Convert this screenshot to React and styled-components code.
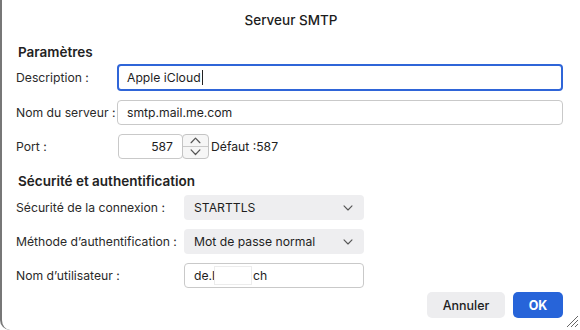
import React from 'react'
import styled, { createGlobalStyle } from 'styled-components'

const Global = createGlobalStyle`
  html, body { margin: 0; padding: 0; background: #fff; }
  body { font-family: "Inter", "Liberation Sans", sans-serif; color: #222; }
`

const Window = styled.div`
  position: relative;
  box-sizing: border-box;
  width: 580px;
  height: 330px;
  background: #fff;
  border-left: 2px solid #777;
  border-bottom-left-radius: 10px;
  padding: 0 17px 0 14px;
  display: flex;
  flex-direction: column;
  overflow: hidden;
`

const Title = styled.div`
  height: 42px;
  line-height: 40px;
  text-align: center;
  font-size: 13.5px;
  font-weight: 500;
  color: #1c1c1c;
  margin-right: -3px;
`

const Heading = styled.div`
  height: 20px;
  line-height: 20px;
  font-size: 13.5px;
  font-weight: 600;
  padding-left: 2px;
  margin-top: ${p => p.$top || 0}px;
`

const Form = styled.div`
  display: grid;
  grid-template-columns: ${p => p.$cols};
  row-gap: ${p => p.$gap}px;
  align-items: center;
  margin-top: ${p => p.$top}px;
`

const Label = styled.label`
  font-size: 12.2px;
  color: #2a2a2a;
  white-space: nowrap;
`

const Input = styled.div`
  box-sizing: border-box;
  height: ${p => (p.$focus ? 27 : 25)}px;
  border: ${p => (p.$focus ? '2px solid #2f65d8' : '1px solid #c9c9c9')};
  border-radius: 4px;
  background: #fff;
  font-size: 12.2px;
  display: flex;
  align-items: center;
  padding: 0 ${p => (p.$focus ? 8 : 9)}px;
  color: #1e1e1e;
  width: ${p => p.$w || 'auto'};
  justify-content: ${p => (p.$right ? 'flex-end' : 'flex-start')};
  white-space: nowrap;
`

const Caret = styled.span`
  display: inline-block;
  width: 1px;
  height: 15px;
  background: #222;
  margin-left: 1px;
`

const PortRow = styled.div`
  display: flex;
  align-items: center;
  margin-left: 1px;
`

const Spinner = styled.div`
  box-sizing: border-box;
  width: 27px;
  height: 25px;
  border: 1px solid #c4c4c4;
  border-radius: 4px;
  background: #f6f6f6;
  display: flex;
  flex-direction: column;
  margin-left: -1px;
`

const SpinHalf = styled.div`
  flex: 1;
  display: flex;
  align-items: center;
  justify-content: center;
  border-top: ${p => (p.$bottom ? '1px solid #c9c9c9' : 'none')};
`

const DefaultText = styled.span`
  font-size: 12.2px;
  margin-left: 2px;
`

const Select = styled.div`
  box-sizing: border-box;
  width: 180px;
  height: 25px;
  border-radius: 4px;
  background: #eeeef0;
  display: flex;
  align-items: center;
  justify-content: space-between;
  padding: 0 11px 0 10px;
  font-size: 12.2px;
  color: #1e1e1e;
`

const Redacted = styled.span`
  display: inline-block;
  width: 36px;
  height: 17px;
  background: #fff;
  border: 1px solid #ececec;
  margin-left: -1px;
  margin-right: 1px;
`

const Footer = styled.div`
  display: flex;
  justify-content: flex-end;
  gap: 8px;
  margin-top: 4px;
`

const Button = styled.button`
  height: 26px;
  width: ${p => p.$w}px;
  border: none;
  border-radius: 5px;
  font-family: inherit;
  font-size: 12.5px;
  font-weight: ${p => (p.$primary ? 700 : 500)};
  background: ${p => (p.$primary ? '#2764d9' : '#ededef')};
  color: ${p => (p.$primary ? '#fff' : '#1e1e1e')};
  padding: 0;
`

const Grip = styled.svg`
  position: absolute;
  right: 1px;
  bottom: 2px;
`

const Chevron = ({ up, size = 10 }) => (
  <svg width={size} height={size * 0.6} viewBox="0 0 10 6" fill="none">
    <path
      d={up ? 'M1 5.2 L5 1 L9 5.2' : 'M1 0.8 L5 5 L9 0.8'}
      stroke="#555"
      strokeWidth="1.1"
      strokeLinecap="round"
      strokeLinejoin="round"
    />
  </svg>
)

export default function App() {
  return (
    <>
      <Global />
      <Window>
        <Title>Serveur SMTP</Title>
        <Heading>Paramètres</Heading>
        <Form $cols="101px 1fr" $gap={9} $top={2}>
          <Label>Description :</Label>
          <Input $focus>
            Apple iCloud<Caret />
          </Input>
          <Label>Nom du serveur :</Label>
          <Input>smtp.mail.me.com</Input>
          <Label>Port :</Label>
          <PortRow>
            <Input $w="65px" $right>587</Input>
            <Spinner>
              <SpinHalf>
                <Chevron up size={11} />
              </SpinHalf>
              <SpinHalf $bottom>
                <Chevron size={11} />
              </SpinHalf>
            </Spinner>
            <DefaultText>Défaut :587</DefaultText>
          </PortRow>
        </Form>
        <Heading $top={12}>Sécurité et authentification</Heading>
        <Form $cols="168px 180px" $gap={9} $top={4}>
          <Label>Sécurité de la connexion :</Label>
          <Select>
            STARTTLS
            <Chevron />
          </Select>
          <Label>Méthode d’authentification :</Label>
          <Select>
            Mot de passe normal
            <Chevron />
          </Select>
          <Label>Nom d’utilisateur :</Label>
          <Input $w="180px">
            de.l<Redacted />ch
          </Input>
        </Form>
        <Footer>
          <Button $w={78}>Annuler</Button>
          <Button $w={50} $primary>OK</Button>
        </Footer>
        <Grip width="14" height="14" viewBox="0 0 14 14">
          <path d="M2 13 L13 2 M6 13 L13 6 M10 13 L13 10" stroke="#666" strokeWidth="1" />
        </Grip>
      </Window>
    </>
  )
}
